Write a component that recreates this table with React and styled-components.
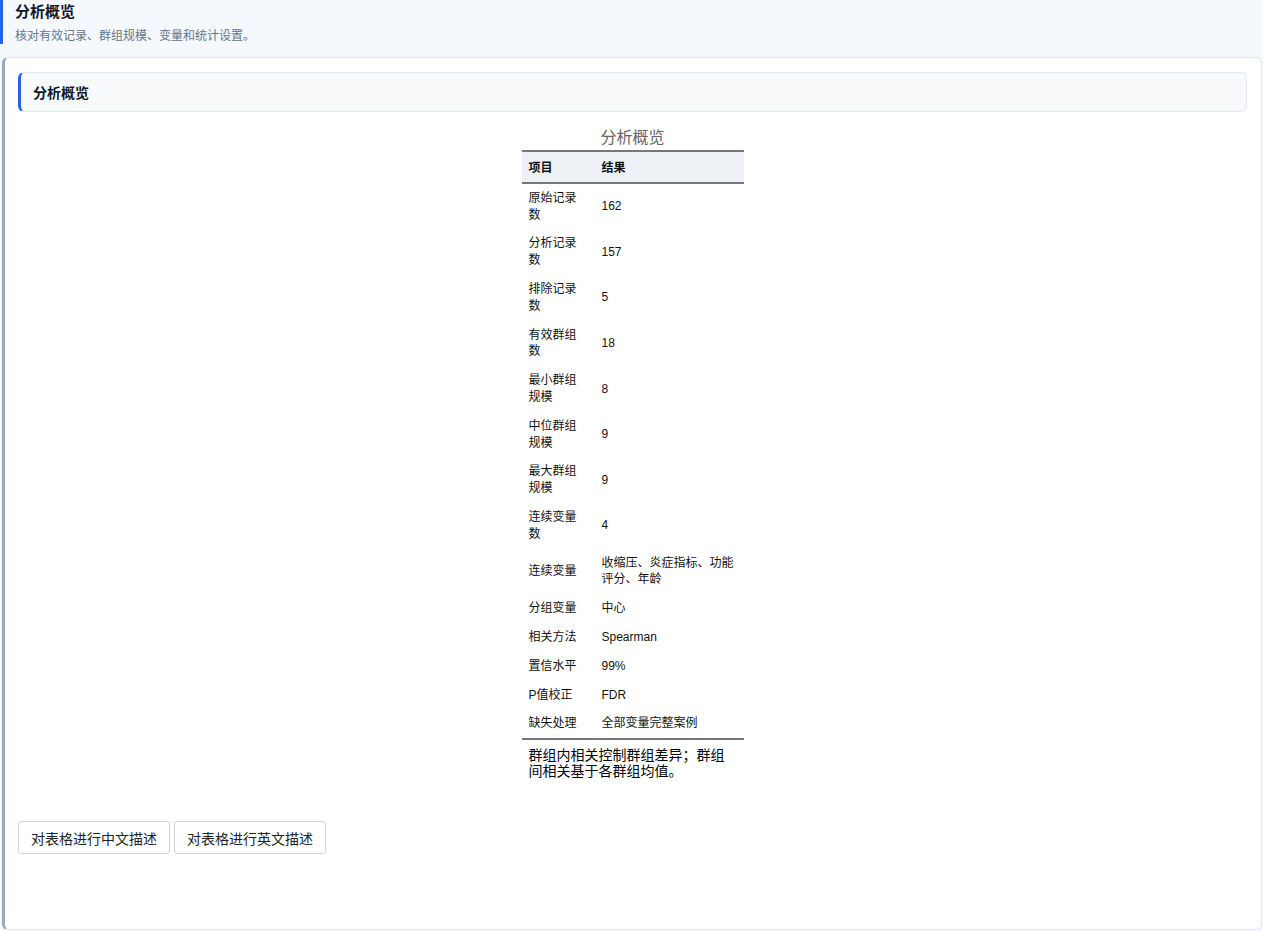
import styled, { createGlobalStyle } from 'styled-components';

const GlobalStyle = createGlobalStyle`
    html, body {
        margin: 0;
        padding: 0;
        background: #f5f8fd;
        font-family: "Liberation Sans", "Noto Sans CJK SC", sans-serif;
        color: #111827;
    }
`;

const Page = styled.div`
    display: flex;
    flex-direction: column;
    height: 931px;
    box-sizing: border-box;
`;

const Header = styled.header`
    border-left: 3px solid #2563eb;
    padding: 2px 0 0 12px;
    height: 44px;
    box-sizing: border-box;
    margin-bottom: 13px;

    h1 {
        margin: 0;
        font-size: 15px;
        line-height: 20px;
        font-weight: 700;
        color: #0f172a;
    }

    p {
        margin: 6px 0 0;
        font-size: 12px;
        line-height: 16px;
        color: #64748b;
    }
`;

const Card = styled.section`
    flex: 1;
    margin: 0 1px 1px 2px;
    background: #fff;
    border: 1px solid #e2e8f0;
    border-left: 3px solid #9aa8bd;
    border-radius: 6px;
    padding: 14px 14px 14px 13px;
`;

const SectionTitle = styled.div`
    height: 40px;
    box-sizing: border-box;
    display: flex;
    align-items: center;
    padding-left: 12px;
    background: #f8fafc;
    border: 1px solid #e2e8f0;
    border-left: 3px solid #2563eb;
    border-radius: 6px;
    font-size: 14px;
    font-weight: 700;
    color: #0f172a;
`;

const TableWrap = styled.div`
    display: flex;
    justify-content: center;
    margin-top: 14px;
`;

const Table = styled.table`
    width: 222px;
    border-collapse: collapse;
    font-size: 12px;
    line-height: 16.8px;
    color: #111;

    caption {
        font-size: 16px;
        line-height: 24px;
        color: #666;
    }

    thead tr {
        background: #eef2f6;
        border-top: 2px solid #777;
        border-bottom: 2px solid #777;
    }

    tbody tr:last-child {
        border-bottom: 2px solid #777;
    }

    th {
        text-align: left;
        font-weight: 700;
        padding: 8px 7px 5px;
    }

    td {
        padding: 6px 7px;
        vertical-align: middle;
    }

    th:first-child, td:first-child {
        width: 59px;
    }

    tfoot td {
        font-size: 14px;
        line-height: 16px;
        padding: 7px 7px 0;
        color: #000;
    }
`;

const Actions = styled.div`
    display: flex;
    gap: 4px;
    margin-top: 42px;
`;

const Button = styled.button`
    height: 33px;
    padding: 0 12px;
    background: #fff;
    border: 1px solid #d1d5db;
    border-radius: 3px;
    font-family: "Liberation Sans", "Noto Sans CJK SC", sans-serif;
    font-size: 14px;
    color: #222;
    cursor: pointer;
`;

const rows = [
    ['原始记录数', '162'],
    ['分析记录数', '157'],
    ['排除记录数', '5'],
    ['有效群组数', '18'],
    ['最小群组规模', '8'],
    ['中位群组规模', '9'],
    ['最大群组规模', '9'],
    ['连续变量数', '4'],
    ['连续变量', '收缩压、炎症指标、功能评分、年龄'],
    ['分组变量', '中心'],
    ['相关方法', 'Spearman'],
    ['置信水平', '99%'],
    ['P值校正', 'FDR'],
    ['缺失处理', '全部变量完整案例'],
];

const App = () => {
    return (
        <Page>
            <GlobalStyle />
            <Header>
                <h1>分析概览</h1>
                <p>核对有效记录、群组规模、变量和统计设置。</p>
            </Header>
            <Card>
                <SectionTitle>分析概览</SectionTitle>
                <TableWrap>
                    <Table>
                        <caption>分析概览</caption>
                        <thead>
                            <tr>
                                <th>项目</th>
                                <th>结果</th>
                            </tr>
                        </thead>
                        <tbody>
                            {rows.map(([k, v], i) => (
                                <tr key={i}>
                                    <td>{k}</td>
                                    <td>{v}</td>
                                </tr>
                            ))}
                        </tbody>
                        <tfoot>
                            <tr>
                                <td colSpan={2}>群组内相关控制群组差异；群组间相关基于各群组均值。</td>
                            </tr>
                        </tfoot>
                    </Table>
                </TableWrap>
                <Actions>
                    <Button>对表格进行中文描述</Button>
                    <Button>对表格进行英文描述</Button>
                </Actions>
            </Card>
        </Page>
    );
};

export default App;
